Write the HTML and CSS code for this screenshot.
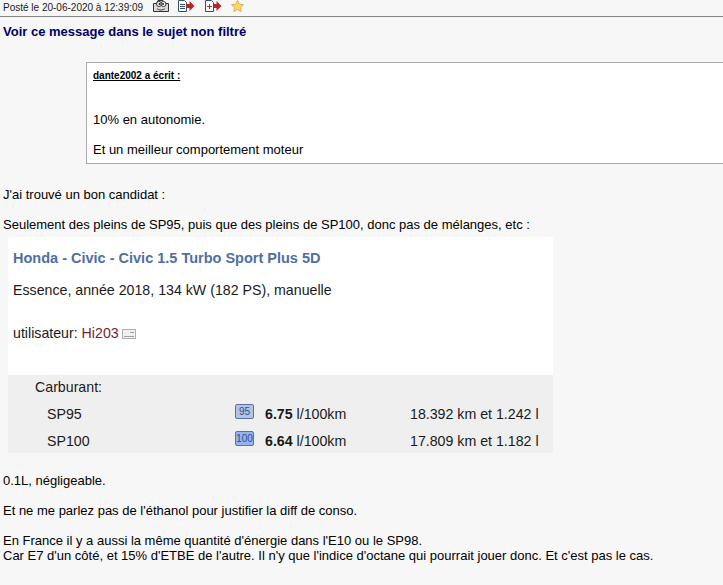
FILE: index.html
```html
<!DOCTYPE html>
<html lang="fr">
<head>
<meta charset="utf-8">
<title>Message</title>
<link rel="stylesheet" href="styles.css">
</head>
<body>
<header class="toolbar">
  <span class="date">Posté le 20-06-2020 à 12:39:09</span>
  <span class="tools">
    <svg class="tool t-profile" width="16" height="12" viewBox="0 0 16 12"><path d="M.5 11.500V3.500h3l1.500-3h5l1.500 3h4v8z" fill="#d8d8d8" stroke="#333"/><circle cx="6" cy="4" r="2.500" fill="#fff" stroke="#333"/><circle cx="10.500" cy="4" r="2.500" fill="#fff" stroke="#333"/><circle cx="6.500" cy="4" r="1" fill="#222"/><circle cx="10" cy="4" r="1" fill="#222"/><path d="M4 8.500c2 2 6 2 8 0" fill="none" stroke="#444"/></svg>
    <svg class="tool t-quote" width="17" height="12" viewBox="0 0 17 12"><path d="M.5.500h6l2 2v9h-8z" fill="#fff" stroke="#35506e"/><path d="M2 4.500h5M2 6.500h5M2 8.500h5" stroke="#35506e"/><path d="M8 4h3.500V1l5 5-5 5V8H8z" fill="#b3262c"/></svg>
    <svg class="tool t-add" width="17" height="12" viewBox="0 0 17 12"><path d="M.5.500h6l2 2v9h-8z" fill="#fff" stroke="#35506e"/><path d="M2 6.500h5M4.500 4v5" stroke="#b3262c"/><path d="M8 4h3.500V1l5 5-5 5V8H8z" fill="#b3262c"/></svg>
    <svg class="tool t-star" width="13" height="12" viewBox="0 0 13 12"><path d="M6.500.5l1.800 3.700 4.200.5-3.100 2.800.8 4-3.700-2-3.700 2 .8-4L.5 4.700l4.200-.5z" fill="#f8d96a" stroke="#e0b050"/></svg>
  </span>
</header>
<a class="filter-link" href="#">Voir ce message dans le sujet non filtré</a>
<blockquote class="quote">
  <p class="quote-author">dante2002 a écrit :</p>
  <p class="quote-line first">10% en autonomie.</p>
  <p class="quote-line">Et un meilleur comportement moteur</p>
</blockquote>
<p class="text t1">J'ai trouvé un bon candidat :</p>
<p class="text t2">Seulement des pleins de SP95, puis que des pleins de SP100, donc pas de mélanges, etc :</p>
<section class="card">
  <div class="card-top">
    <h2 class="car">Honda - Civic - Civic 1.5 Turbo Sport Plus 5D</h2>
    <p class="specs">Essence, année 2018, 134 kW (182 PS), manuelle</p>
    <p class="user">utilisateur: <span class="username">Hi203</span>
      <svg class="mail" width="14" height="10" viewBox="0 0 14 10"><rect x=".5" y=".5" width="13" height="9" fill="#f0f0f0" stroke="#b0b0b0"/><path d="M8 3.500h4M2 7.500h10" stroke="#a0a0a0"/></svg>
    </p>
  </div>
  <div class="card-bottom">
    <div class="fuel-head">Carburant:</div>
    <div class="fuel-row">
      <span class="fuel-name">SP95</span>
      <span class="badge b95">95</span>
      <span class="cons"><b>6.75</b> l/100km</span>
      <span class="dist">18.392 km et 1.242 l</span>
    </div>
    <div class="fuel-row">
      <span class="fuel-name">SP100</span>
      <span class="badge b100">100</span>
      <span class="cons"><b>6.64</b> l/100km</span>
      <span class="dist">17.809 km et 1.182 l</span>
    </div>
  </div>
</section>
<p class="text t3">0.1L, négligeable.</p>
<p class="text t4">Et ne me parlez pas de l'éthanol pour justifier la diff de conso.</p>
<p class="text t5">En France il y a aussi la même quantité d'énergie dans l'E10 ou le SP98.<br>Car E7 d'un côté, et 15% d'ETBE de l'autre. Il n'y que l'indice d'octane qui pourrait jouer donc. Et c'est pas le cas.</p>
</body>
</html>
```
FILE: styles.css
```css
html, body { margin: 0; padding: 0; }
body {
  background: #f7f7f7;
  color: #000;
  font: 13px/15px "Liberation Sans", Arial, sans-serif;
  height: 585px;
  overflow: hidden;
}
.toolbar {
  display: flex;
  align-items: flex-start;
  height: 16px;
  border-bottom: 1px solid #888;
  padding-left: 3px;
  font-size: 10px;
  line-height: 15px;
  color: #222;
}
.tools { display: flex; align-items: flex-start; margin-left: 10px; }
.tool { display: block; }
.t-profile { margin-right: 9px; }
.t-quote { margin-right: 10px; }
.t-add { margin-right: 9px; }
.filter-link {
  display: block;
  margin: 7px 0 0 3px;
  color: #000066;
  font-weight: bold;
  text-decoration: none;
}
.quote {
  margin: 23px 0 0 86px;
  height: 100px;
  padding: 0 0 0 6px;
  background: #fff;
  border: 1px solid #a9a9a9;
  border-right: none;
}
.quote-author {
  margin: 0;
  padding-top: 7px;
  font-size: 10px;
  line-height: 12px;
  font-weight: bold;
  text-decoration: underline;
}
.quote-line { margin: 15px 0 0; }
.quote-line.first { margin-top: 30px; }
.text { margin: 0 0 0 3px; }
.t1 { margin-top: 23px; }
.t2 { margin-top: 15px; }
.card { margin: 5px 0 0 8px; width: 545px; font-size: 14.2px; line-height: 16px; color: #1a1a1a; }
.card-top { background: #fff; height: 138px; padding: 0 5px; box-sizing: border-box; overflow: hidden; }
.car { margin: 13px 0 0; font-size: 14.5px; line-height: 16px; color: #4f6f9f; font-weight: bold; }
.specs { margin: 16px 0 0; }
.user { margin: 27px 0 0; display: flex; align-items: center; white-space: pre; }
.username { color: #7a2230; }
.mail { margin-left: 3px; margin-top: 1px; }
.card-bottom { background: #efefef; height: 78px; padding-top: 4px; box-sizing: border-box; }
.fuel-head { padding-left: 27px; }
.fuel-row { display: flex; align-items: center; margin-top: 11px; height: 16px; }
.fuel-name { width: 188px; margin-left: 39px; }
.badge {
  width: 19px; height: 15px;
  box-sizing: border-box;
  border: 1px solid #5a72a6;
  border-radius: 2px;
  font-size: 10px; line-height: 13px;
  text-align: center;
  color: #3b4f7a;
  margin-top: -5px;
}
.b95 { background: #b3c3e3; }
.b100 { background: #92b4f2; }
.cons { margin-left: 11px; width: 145px; }
.dist { white-space: nowrap; }
.t3 { margin-top: 20px; }
.t4 { margin-top: 15px; }
.t5 { margin-top: 15px; }
```
